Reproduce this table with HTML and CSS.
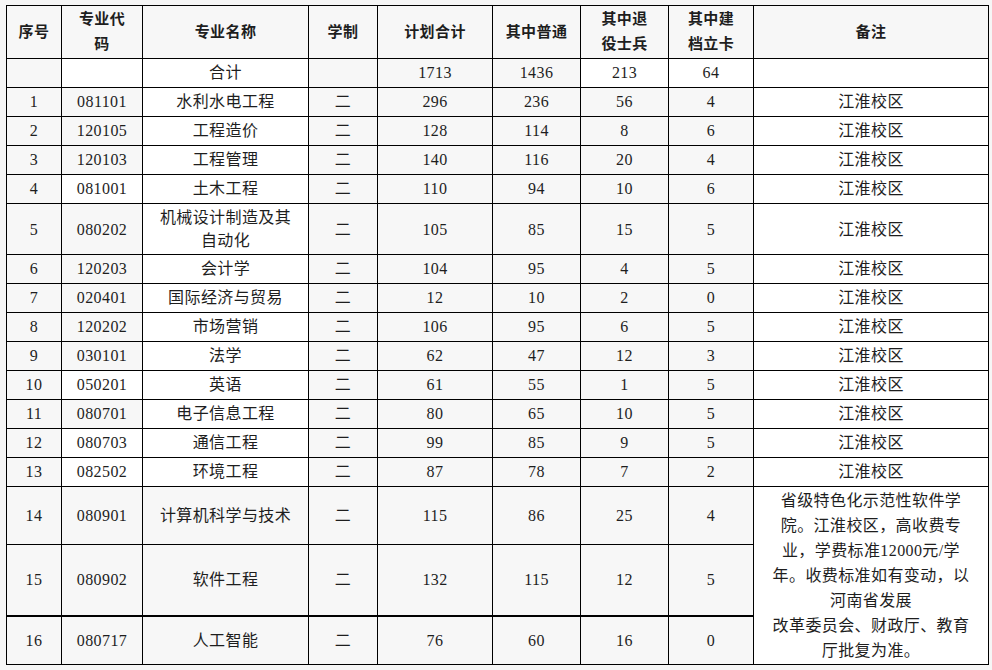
FILE: index.html
```html
<!DOCTYPE html>
<html lang="zh-CN">
<head>
<meta charset="utf-8">
<title>招生计划</title>
<link rel="stylesheet" href="styles.css">
</head>
<body>
<div class="wrap">
<table class="plan">
  <colgroup>
    <col class="c1"><col class="c2"><col class="c3"><col class="c4"><col class="c5"><col class="c6"><col class="c7"><col class="c8"><col class="c9">
  </colgroup>
  <thead>
    <tr class="head">
      <th>序号</th><th>专业代<br>码</th><th>专业名称</th><th>学制</th><th>计划合计</th><th>其中普通</th><th>其中退<br>役士兵</th><th>其中建<br>档立卡</th><th>备注</th>
    </tr>
  </thead>
  <tbody>
    <tr class="total"><td></td><td class="w"></td><td class="w">合计</td><td></td><td>1713</td><td>1436</td><td class="w">213</td><td class="w">64</td><td class="w"></td></tr>
    <tr><td>1</td><td>081101</td><td class="w">水利水电工程</td><td>二</td><td>296</td><td>236</td><td>56</td><td>4</td><td class="w">江淮校区</td></tr>
    <tr><td>2</td><td>120105</td><td class="w">工程造价</td><td>二</td><td>128</td><td>114</td><td>8</td><td>6</td><td class="w">江淮校区</td></tr>
    <tr><td>3</td><td>120103</td><td class="w">工程管理</td><td>二</td><td>140</td><td>116</td><td>20</td><td>4</td><td class="w">江淮校区</td></tr>
    <tr><td>4</td><td class="w">081001</td><td class="w">土木工程</td><td>二</td><td>110</td><td>94</td><td>10</td><td>6</td><td class="w">江淮校区</td></tr>
    <tr class="two"><td>5</td><td>080202</td><td class="w">机械设计制造及其<br>自动化</td><td>二</td><td>105</td><td>85</td><td>15</td><td>5</td><td class="w">江淮校区</td></tr>
    <tr><td>6</td><td>120203</td><td class="w">会计学</td><td>二</td><td>104</td><td>95</td><td>4</td><td>5</td><td class="w">江淮校区</td></tr>
    <tr><td>7</td><td>020401</td><td class="w">国际经济与贸易</td><td>二</td><td>12</td><td>10</td><td>2</td><td>0</td><td class="w">江淮校区</td></tr>
    <tr><td>8</td><td>120202</td><td class="w">市场营销</td><td>二</td><td>106</td><td>95</td><td>6</td><td>5</td><td class="w">江淮校区</td></tr>
    <tr><td>9</td><td>030101</td><td class="w">法学</td><td>二</td><td>62</td><td>47</td><td>12</td><td>3</td><td class="w">江淮校区</td></tr>
    <tr><td>10</td><td class="w">050201</td><td class="w">英语</td><td>二</td><td>61</td><td>55</td><td>1</td><td>5</td><td class="w">江淮校区</td></tr>
    <tr><td>11</td><td>080701</td><td class="w">电子信息工程</td><td>二</td><td>80</td><td>65</td><td>10</td><td>5</td><td class="w">江淮校区</td></tr>
    <tr><td>12</td><td class="w">080703</td><td class="w">通信工程</td><td>二</td><td>99</td><td>85</td><td>9</td><td>5</td><td class="w">江淮校区</td></tr>
    <tr><td>13</td><td class="w">082502</td><td class="w">环境工程</td><td>二</td><td>87</td><td>78</td><td>7</td><td>2</td><td class="w">江淮校区</td></tr>
    <tr class="r14"><td>14</td><td>080901</td><td>计算机科学与技术</td><td>二</td><td>115</td><td>86</td><td>25</td><td>4</td>
      <td class="w remark" rowspan="3">省级特色化示范性软件学<br>院。江淮校区，高收费专<br>业，学费标准12000元/学<br>年。收费标准如有变动，以<br>河南省发展<br>改革委员会、财政厅、教育<br>厅批复为准。</td></tr>
    <tr class="r15"><td>15</td><td>080902</td><td>软件工程</td><td>二</td><td>132</td><td>115</td><td>12</td><td>5</td></tr>
    <tr class="r16"><td>16</td><td>080717</td><td>人工智能</td><td>二</td><td>76</td><td>60</td><td>16</td><td>0</td></tr>
  </tbody>
</table>
</div>
</body>
</html>
```

FILE: styles.css
```css
html, body {
  margin: 0;
  padding: 0;
  background: #f6f6f6;
}

.wrap {
  padding: 5px 4px 0 6px;
}

.plan {
  width: 982px;
  table-layout: fixed;
  border-collapse: collapse;
  font-family: "Liberation Serif", "Noto Sans CJK SC", serif;
  font-size: 16px;
  letter-spacing: 0.4px;
  color: #1e1e1e;
  background: #f7f7f7;
}

.c1 { width: 55px; }
.c2 { width: 81px; }
.c3 { width: 166px; }
.c4 { width: 69px; }
.c5 { width: 115px; }
.c6 { width: 88px; }
.c7 { width: 88px; }
.c8 { width: 85px; }
.c9 { width: 235px; }

.plan th,
.plan td {
  border: 1px solid #000;
  text-align: center;
  vertical-align: middle;
  padding: 2px 2px;
  line-height: 24px;
  font-weight: normal;
  white-space: nowrap;
}

.plan th {
  font-weight: bold;
  font-size: 15px;
  line-height: 25px;
  padding: 1px 2px;
  background: #f7f7f7;
}

.plan td.w {
  background: #ffffff;
}

.plan tr.total td {
  height: 24px;
  padding: 2px 2px;
}

.plan tr.two td {
  line-height: 23px;
}

.plan tr.r14 td { height: 53px; }
.plan tr.r15 td { height: 66px; }
.plan tr.r16 td {
  height: 43px;
  border-top: 2px solid #000;
}

.plan td.remark {
  line-height: 25px;
  padding: 0 2px;
  border-top: 1px solid #000;
}
```
